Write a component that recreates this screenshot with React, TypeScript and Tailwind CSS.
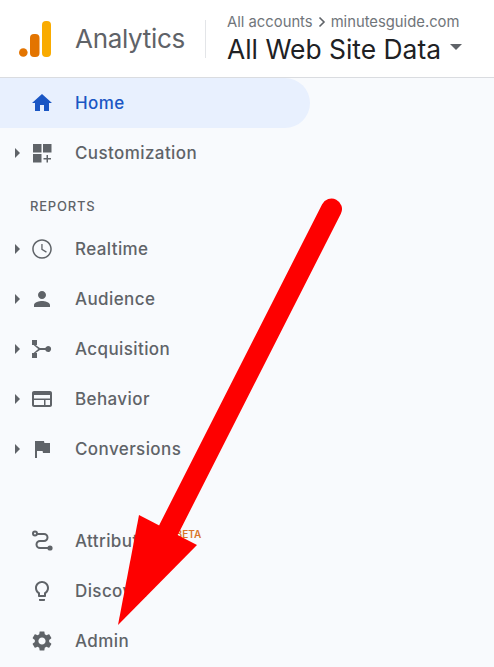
import React from "react";

const paths = {
  home: "M10 20v-6h4v6h5v-8h3L12 3 2 12h3v8z",
  realtime:
    "M12 2.2C6.6 2.2 2.2 6.6 2.2 12s4.4 9.8 9.8 9.8 9.8-4.4 9.8-9.8S17.4 2.2 12 2.2zm0 18.1c-4.6 0-8.3-3.7-8.3-8.3S7.4 3.7 12 3.7s8.3 3.7 8.3 8.3-3.7 8.3-8.3 8.3zM12.6 7h-1.3v5.8l4.8 2.9.7-1.1-4.2-2.5z",
  audience:
    "M12 12c2.21 0 4-1.79 4-4s-1.79-4-4-4-4 1.79-4 4 1.79 4 4 4zm0 2c-2.67 0-8 1.34-8 4v2h16v-2c0-2.66-5.33-4-8-4z",
  acquisition:
    "M2 3h5v5H5.6l4.3 3H15.3a3 3 0 1 1 0 2H9.9l-4.3 3H7v5H2v-5h1.6l4.6-4-4.6-4H2z",
  behavior:
    "M20 4H4c-1.1 0-2 .9-2 2v12c0 1.1.9 2 2 2h16c1.1 0 2-.9 2-2V6c0-1.1-.9-2-2-2zM4 18v-5h10v5H4zm11.5 0v-5H20v5h-4.5zM20 11.5H4V8h16v3.5z",
  conversions: "M14.4 6L14 4H5v17h2v-7h5.6l.4 2h7V6z",
  discover:
    "M9 21c0 .55.45 1 1 1h4c.55 0 1-.45 1-1v-1H9v1zm3-19C8.14 2 5 5.14 5 9c0 2.38 1.19 4.47 3 5.74V17c0 .55.45 1 1 1h6c.55 0 1-.45 1-1v-2.26c1.81-1.27 3-3.36 3-5.74 0-3.86-3.14-7-7-7zm2.85 11.1l-.85.6V16h-4v-2.3l-.85-.6C7.8 12.16 7 10.63 7 9c0-2.76 2.24-5 5-5s5 2.24 5 5c0 1.63-.8 3.16-2.15 4.1z",
  admin:
    "M19.14 12.94c.04-.3.06-.61.06-.94 0-.32-.02-.64-.07-.94l2.03-1.58c.18-.14.23-.41.12-.61l-1.92-3.32c-.12-.22-.37-.29-.59-.22l-2.39.96c-.5-.38-1.03-.7-1.62-.94l-.36-2.54c-.04-.24-.24-.41-.48-.41h-3.84c-.24 0-.43.17-.47.41l-.36 2.54c-.59.24-1.13.57-1.62.94l-2.39-.96c-.22-.08-.47 0-.59.22L2.74 8.87c-.12.21-.08.47.12.61l2.03 1.58c-.05.3-.09.63-.09.94s.02.64.07.94l-2.03 1.58c-.18.14-.23.41-.12.61l1.92 3.32c.12.22.37.29.59.22l2.39-.96c.5.38 1.03.7 1.62.94l.36 2.54c.05.24.24.41.48.41h3.84c.24 0 .44-.17.47-.41l.36-2.54c.59-.24 1.13-.56 1.62-.94l2.39.96c.22.08.47 0 .59-.22l1.92-3.32c.12-.22.07-.47-.12-.61l-2.01-1.58zM12 15.6c-1.98 0-3.6-1.62-3.6-3.6s1.62-3.6 3.6-3.6 3.6 1.62 3.6 3.6-1.62 3.6-3.6 3.6z",
};

const Icon: React.FC<{ d: string }> = ({ d }) => (
  <svg width="24" height="24" viewBox="0 0 24 24" fill="currentColor">
    <path d={d} />
  </svg>
);

const CustomizationIcon = () => (
  <svg width="24" height="24" viewBox="0 0 24 24" fill="currentColor">
    <rect x="3" y="3" width="8.5" height="8.5" />
    <rect x="13" y="3" width="8.5" height="8.5" />
    <rect x="3" y="13" width="8.5" height="8.5" />
    <path d="M16.5 14h1.5v3h3v1.5h-3v3h-1.5v-3h-3V17h3z" />
  </svg>
);

const AttributionIcon = () => (
  <svg width="24" height="24" viewBox="0 0 24 24" fill="none" stroke="currentColor" strokeWidth="2">
    <circle cx="5" cy="4.5" r="2" />
    <path d="M7 5h7a3.5 3.5 0 0 1 0 7h-4a3.5 3.5 0 0 0 0 7h8" />
    <circle cx="20" cy="19" r="2.6" fill="currentColor" stroke="none" />
  </svg>
);

const Row: React.FC<{
  label: string;
  icon: React.ReactNode;
  caret?: boolean;
  active?: boolean;
  badge?: string;
}> = ({ label, icon, caret, active, badge }) => (
  <div
    className={`flex h-[50px] items-center ${
      active ? "w-[310px] rounded-r-[25px] bg-[#e8f0fe] text-[#1a56c4]" : "text-[#5f6368]"
    }`}
  >
    <div className="flex w-[30px] justify-end pr-[10px]">
      {caret && (
        <div className="h-0 w-0 border-y-[5px] border-l-[5px] border-y-transparent border-l-[#5f6368]" />
      )}
    </div>
    <div className="flex w-[24px] justify-center">{icon}</div>
    <span className="ml-[21px] text-[17px] leading-none font-medium tracking-[0.4px]">{label}</span>
    {badge && (
      <span className="mb-[14px] ml-[11px] text-[10px] leading-none font-semibold text-[#d9762a]">
        {badge}
      </span>
    )}
  </div>
);

export default function App() {
  return (
    <div className="relative h-[667px] w-[494px] overflow-hidden bg-[#f8fafd] [font-family:Inter,sans-serif]">
      <header className="flex h-[78px] items-center border-b border-[#dadce0] bg-white">
        <svg width="32" height="36" viewBox="0 0 32 36" className="ml-[19px]">
          <circle cx="4.3" cy="31.5" r="4.3" fill="#e37400" />
          <rect x="11" y="13" width="9.5" height="23" rx="4" fill="#e37400" />
          <rect x="23" y="0" width="9" height="36" rx="4" fill="#f9ab00" />
        </svg>
        <span className="ml-[24px] text-[26px] leading-none tracking-[-0.3px] text-[#5f6368]">Analytics</span>
        <div className="ml-[20px] h-[38px] w-px bg-[#e3e5e8]" />
        <div className="mb-[2px] ml-[21px]">
          <div className="flex items-center text-[14.8px] leading-[20px] text-[#70757a]">
            All accounts
            <svg width="12" height="12" viewBox="0 0 12 12" className="mx-[3px]" fill="none" stroke="#5f6368" strokeWidth="1.6">
              <path d="M3.5 1.5 8 6l-4.5 4.5" />
            </svg>
            minutesguide.com
          </div>
          <div className="mt-[2px] flex items-center text-[26.4px] leading-[30px] text-[#202124]">
            All Web Site Data
            <div className="mt-[-4px] ml-[9px] h-0 w-0 border-x-[6px] border-t-[6px] border-x-transparent border-t-[#5f6368]" />
          </div>
        </div>
      </header>

      <nav>
        <Row label="Home" active icon={<Icon d={paths.home} />} />
        <Row label="Customization" caret icon={<CustomizationIcon />} />
        <div className="flex h-[46px] items-center pt-[12px] pl-[30px] text-[13px] font-medium tracking-[0.8px] text-[#5f6368]">
          REPORTS
        </div>
        <Row label="Realtime" caret icon={<Icon d={paths.realtime} />} />
        <Row label="Audience" caret icon={<Icon d={paths.audience} />} />
        <Row label="Acquisition" caret icon={<Icon d={paths.acquisition} />} />
        <Row label="Behavior" caret icon={<Icon d={paths.behavior} />} />
        <Row label="Conversions" caret icon={<Icon d={paths.conversions} />} />
        <div className="h-[42px]" />
        <Row label="Attribution" badge="BETA" icon={<AttributionIcon />} />
        <Row label="Discover" icon={<Icon d={paths.discover} />} />
        <Row label="Admin" icon={<Icon d={paths.admin} />} />
      </nav>

      {/* red annotation arrow drawn over the page */}
      <svg width="494" height="667" viewBox="0 0 494 667" className="absolute inset-0">
        <path d="M331.5 209 169 529" stroke="#fe0000" strokeWidth="21" strokeLinecap="round" fill="none" />
        <path d="M139 515 197 545 118 625z" fill="#fe0000" />
      </svg>
    </div>
  );
}
